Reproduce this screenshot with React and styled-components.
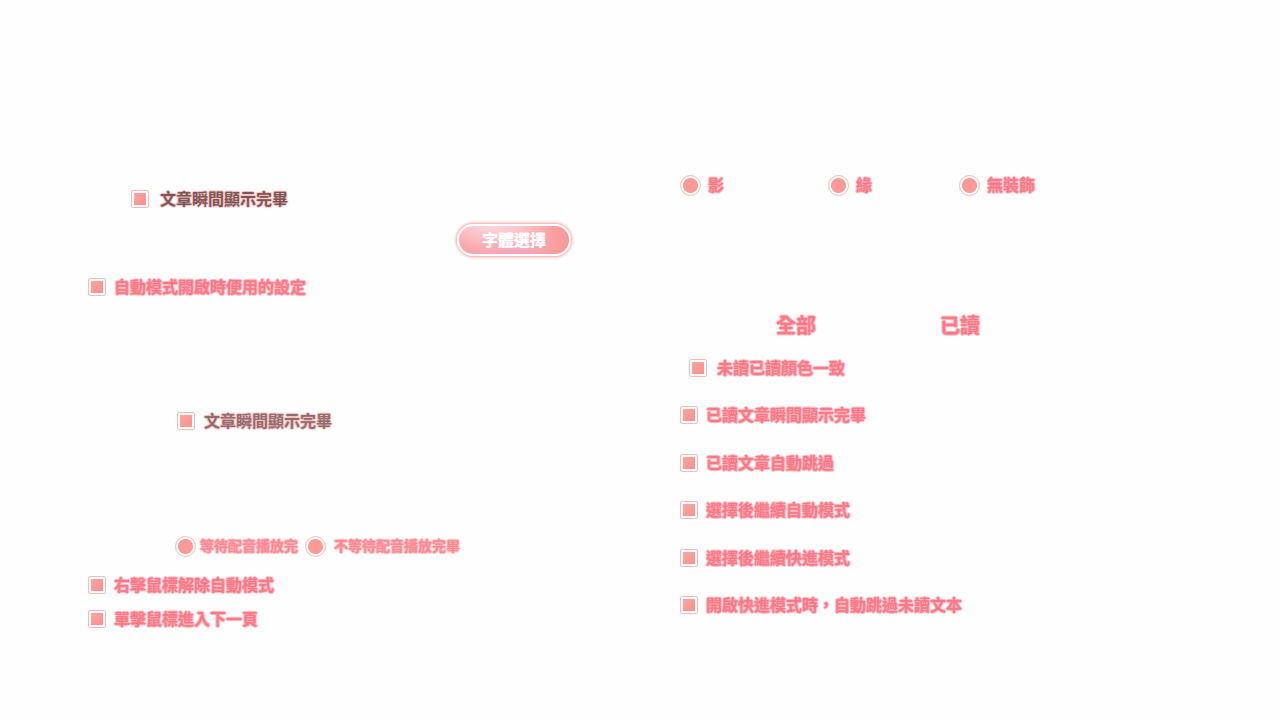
import React from "react";
import styled, { createGlobalStyle } from "styled-components";

const GlobalStyle = createGlobalStyle`
  *, *::before, *::after { box-sizing: border-box; }
  body {
    margin: 0;
    background: #fefefe;
    font-family: "Noto Sans CJK TC", "Noto Sans", sans-serif;
  }
`;

const Page = styled.main`
  display: grid;
  grid-template-columns: 1fr 1fr;
  min-height: 100vh;
`;

const Panel = styled.section`
  display: flex;
  flex-direction: column;
  align-items: flex-start;
  padding: ${(p) => p.$padding};
`;

const tones = {
  pink: { text: "#fb7987", glow: "#fdb0b8" },
  soft: { text: "#fb8a93", glow: "#fdb4ba" },
  brown: { text: "#7a5858", glow: "#f7bcbe" },
  fadedBrown: { text: "#906d6e", glow: "#f9bcbe" },
};

const glow = (color) =>
  `1px 0 1px ${color}, -1px 0 1px ${color}, 0 1px 1px ${color}, 0 -1px 1px ${color}`;

const Option = styled.label`
  display: flex;
  align-items: center;
  gap: ${(p) => p.$gap || 8}px;
  height: 24px;
  margin: ${(p) => p.$above || 0}px 0 0 ${(p) => p.$indent || 0}px;
  white-space: nowrap;
  cursor: pointer;
`;

const Caption = styled.span`
  padding-bottom: 2px;
  font-size: ${(p) => (p.$small ? 14 : 16)}px;
  line-height: 22px;
  font-weight: 700;
  color: ${(p) => tones[p.$tone].text};
  text-shadow: ${(p) => glow(tones[p.$tone].glow)};
`;

const Control = styled.input`
  appearance: none;
  flex: none;
  margin: 0;
  border: 1px solid #fab9b7;
  background: linear-gradient(135deg, #ffa5a1, #f6918f) content-box, #fff;
  cursor: pointer;

  &:focus-visible {
    outline: 2px solid #fb7987;
    outline-offset: 1px;
  }
`;

const CheckControl = styled(Control).attrs({ type: "checkbox" })`
  width: 18px;
  height: 18px;
  padding: 2px;
  border-radius: 2px;
`;

const RadioControl = styled(Control).attrs({ type: "radio" })`
  width: 21px;
  height: 21px;
  border-radius: 50%;
  background: radial-gradient(circle, #fd9a98 7px, #fff 8px);
`;

const RadioRow = styled.div`
  display: grid;
  grid-template-columns: ${(p) => p.$columns};
  margin: ${(p) => p.$above || 0}px 0 0 ${(p) => p.$indent || 0}px;
`;

const FontButton = styled.button`
  width: 114px;
  height: 32px;
  margin: 13px 0 0 369px;
  padding: 0 0 2px;
  border: 2px solid #fff;
  border-radius: 16px;
  background:
    radial-gradient(ellipse at 28% 0%, rgba(255, 220, 230, 0.9), transparent 55%),
    radial-gradient(ellipse at 50% 100%, rgba(240, 160, 190, 0.8), transparent 55%),
    linear-gradient(100deg, #fba3a3, #fdb3b7 50%, #f59595);
  background-origin: border-box;
  box-shadow: 0 0 3px 1px #f49a9a;
  color: #fff;
  font: 700 16px/26px "Noto Sans CJK TC", "Noto Sans", sans-serif;
  text-shadow: 0 0 1px #fff;
  cursor: pointer;
`;

const ColorHeadings = styled.div`
  display: grid;
  grid-template-columns: 164px auto;
  margin: 114px 0 0 96px;
`;

const ColorHeading = styled.h2`
  margin: 0;
  font-size: 20px;
  line-height: 28px;
  font-weight: 700;
  color: ${tones.pink.text};
  text-shadow: ${glow(tones.pink.glow)};
`;

const OptionList = styled.div`
  display: flex;
  flex-direction: column;
  align-items: flex-start;
  justify-content: space-between;
  min-height: 261px;
  margin-top: 17px;
`;

function Check({ children, tone = "pink", ...layout }) {
  return (
    <Option {...layout}>
      <CheckControl />
      <Caption $tone={tone}>{children}</Caption>
    </Option>
  );
}

function Radio({ children, name, tone = "pink", small, ...layout }) {
  return (
    <Option {...layout}>
      <RadioControl name={name} />
      <Caption $tone={tone} $small={small}>{children}</Caption>
    </Option>
  );
}

export default function App() {
  return (
    <>
      <GlobalStyle />
      <Page lang="zh-Hant">
        <Panel $padding="187px 0 88px 88px">
          <Check tone="brown" $indent={43} $gap={11}>文章瞬間顯示完畢</Check>
          <FontButton type="button">字體選擇</FontButton>
          <Check $above={19}>自動模式開啟時便用的設定</Check>
          <Check tone="fadedBrown" $above={110} $indent={89} $gap={9}>文章瞬間顯示完畢</Check>
          <RadioRow $columns="130px auto" $above={101} $indent={87}>
            <Radio name="voice" tone="soft" small $gap={4}>等待配音播放完</Radio>
            <Radio name="voice" tone="soft" small>不等待配音播放完畢</Radio>
          </RadioRow>
          <Check $above={15}>右擊鼠標解除自動模式</Check>
          <Check $above={10}>單擊鼠標進入下一頁</Check>
        </Panel>

        <Panel $padding="173px 0 88px 40px">
          <RadioRow $columns="148px 131px auto">
            <Radio name="decoration" $gap={7}>影</Radio>
            <Radio name="decoration" $gap={7}>緣</Radio>
            <Radio name="decoration" $gap={7}>無裝飾</Radio>
          </RadioRow>
          <ColorHeadings>
            <ColorHeading>全部</ColorHeading>
            <ColorHeading>已讀</ColorHeading>
          </ColorHeadings>
          <OptionList>
            <Check $indent={9} $gap={10}>未讀已讀顏色一致</Check>
            <Check>已讀文章瞬間顯示完畢</Check>
            <Check>已讀文章自動跳過</Check>
            <Check>選擇後繼續自動模式</Check>
            <Check>選擇後繼續快進模式</Check>
            <Check>開啟快進模式時，自動跳過未讀文本</Check>
          </OptionList>
        </Panel>
      </Page>
    </>
  );
}
